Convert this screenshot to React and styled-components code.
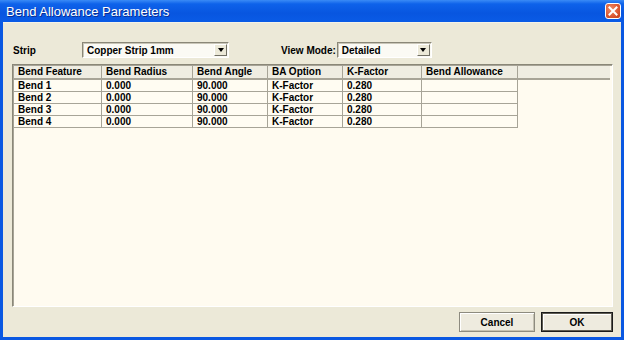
import React from "react";
import styled, { createGlobalStyle } from "styled-components";

const GlobalStyle = createGlobalStyle`
  html, body {
    margin: 0;
    padding: 0;
    background: #ffffff;
  }
  body {
    font-family: "Liberation Sans", Arial, sans-serif;
  }
`;

const columns = [
  { key: "feature", title: "Bend Feature", width: 88 },
  { key: "radius", title: "Bend Radius", width: 91 },
  { key: "angle", title: "Bend Angle", width: 75 },
  { key: "option", title: "BA Option", width: 75 },
  { key: "k", title: "K-Factor", width: 79 },
  { key: "allowance", title: "Bend Allowance", width: 96 },
];

const rows = [1, 2, 3, 4].map((n) => ({
  feature: `Bend ${n}`,
  radius: "0.000",
  angle: "90.000",
  option: "K-Factor",
  k: "0.280",
  allowance: "",
}));

function Combo({ width, value }) {
  return (
    <ComboBox $width={width}>
      <ComboText>{value}</ComboText>
      <DropButton>
        <Arrow />
      </DropButton>
    </ComboBox>
  );
}

function App() {
  return (
    <>
      <GlobalStyle />
      <Window>
        <TitleBar>
          <Title>Bend Allowance Parameters</Title>
          <CloseButton>
            <svg width="10" height="10" viewBox="0 0 10 10">
              <path
                d="M1.5 1.5 L8.5 8.5 M8.5 1.5 L1.5 8.5"
                stroke="#fff"
                strokeWidth="2"
                strokeLinecap="square"
              />
            </svg>
          </CloseButton>
        </TitleBar>
        <Body>
          <Toolbar>
            <Label $width={69}>Strip</Label>
            <Combo width={147} value="Copper Strip 1mm" />
            <Label $gap={52} $after={1}>View Mode:</Label>
            <Combo width={95} value="Detailed" />
          </Toolbar>
          <Grid>
            <HeaderRow>
              {columns.map((c) => (
                <HeaderCell key={c.key} $width={c.width}>
                  {c.title}
                </HeaderCell>
              ))}
              <HeaderFiller />
            </HeaderRow>
            {rows.map((r) => (
              <Row key={r.feature}>
                {columns.map((c) => (
                  <Cell key={c.key} $width={c.width}>
                    {r[c.key]}
                  </Cell>
                ))}
              </Row>
            ))}
          </Grid>
          <Buttons>
            <Button $width={76}>Cancel</Button>
            <Button $width={72} $default>
              OK
            </Button>
          </Buttons>
        </Body>
      </Window>
    </>
  );
}

const Window = styled.div`
  width: 624px;
  height: 340px;
  box-sizing: border-box;
  display: flex;
  flex-direction: column;
  padding: 0 3px 3px;
  background: #0a58e2;
`;

const TitleBar = styled.div`
  height: 22px;
  margin: 0 -3px;
  padding: 0 3px 0 6px;
  display: flex;
  align-items: center;
  justify-content: space-between;
  background: linear-gradient(
    #3a8bf6 0%,
    #0e62ea 18%,
    #0856e0 60%,
    #0a5be6 100%
  );
`;

const Title = styled.span`
  color: #ffffff;
  font-size: 13px;
  text-shadow: 1px 1px 0 #0b2d8f;
  white-space: nowrap;
`;

const CloseButton = styled.div`
  width: 16px;
  height: 16px;
  box-sizing: border-box;
  border: 1px solid #ffffff;
  border-radius: 3px;
  display: flex;
  align-items: center;
  justify-content: center;
  background: radial-gradient(circle at 35% 35%, #f08a66 0%, #dd5a35 55%, #c23d18 100%);
`;

const Body = styled.div`
  flex: 1;
  display: flex;
  flex-direction: column;
  padding: 19px 8px 5px 9px;
  background: #ece9d8;
  border-top: 1px solid #f4f2e8;
  box-sizing: border-box;
  min-height: 0;
`;

const Toolbar = styled.div`
  height: 16px;
  display: flex;
  align-items: center;
  padding-left: 1px;
`;

const Label = styled.span`
  width: ${(p) => (p.$width ? `${p.$width}px` : "auto")};
  margin-left: ${(p) => p.$gap || 0}px;
  margin-right: ${(p) => p.$after || 0}px;
  font-size: 10px;
  font-weight: bold;
  color: #000;
  white-space: nowrap;
`;

const ComboBox = styled.div`
  width: ${(p) => p.$width}px;
  height: 16px;
  box-sizing: border-box;
  display: flex;
  align-items: center;
  justify-content: space-between;
  padding: 1px;
  background: #fbfaf4;
  border: 1px solid;
  border-color: #8a8778 #ffffff #ffffff #8a8778;
  box-shadow: inset 1px 1px 0 #c9c6b8;
`;

const ComboText = styled.span`
  padding-left: 3px;
  font-size: 10px;
  font-weight: bold;
  color: #000;
  white-space: nowrap;
`;

const DropButton = styled.div`
  width: 13px;
  height: 12px;
  box-sizing: border-box;
  display: flex;
  align-items: center;
  justify-content: center;
  background: #ece9d8;
  border: 1px solid;
  border-color: #ffffff #716f64 #716f64 #ffffff;
`;

const Arrow = styled.div`
  width: 0;
  height: 0;
  border-left: 3px solid transparent;
  border-right: 3px solid transparent;
  border-top: 4px solid #000;
`;

const Grid = styled.div`
  flex: 1;
  margin-top: 6px;
  box-sizing: border-box;
  background: #fffbf0;
  border: 1px solid;
  border-color: #8a8778 #ffffff #ffffff #8a8778;
  box-shadow: inset 1px 1px 0 #a7a497;
  padding: 1px 1px 0 1px;
  overflow: hidden;
`;

const HeaderRow = styled.div`
  display: flex;
  height: 14px;
`;

const HeaderCell = styled.div`
  width: ${(p) => p.$width}px;
  box-sizing: border-box;
  padding-left: 4px;
  font-size: 10px;
  font-weight: bold;
  line-height: 12px;
  color: #000;
  background: #efede2;
  border-right: 1px solid #a7a497;
  border-bottom: 2px solid #a7a497;
  white-space: nowrap;
`;

const HeaderFiller = styled.div`
  flex: 1;
  background: #efede2;
  border-bottom: 2px solid #a7a497;
  margin-right: 1px;
`;

const Row = styled.div`
  display: flex;
  height: 12px;
`;

const Cell = styled.div`
  width: ${(p) => p.$width}px;
  box-sizing: border-box;
  padding-left: 4px;
  font-size: 10px;
  font-weight: bold;
  line-height: 11px;
  color: #000;
  background: #fffcf2;
  border-right: 1px solid #a7a497;
  border-bottom: 1px solid #a7a497;
  white-space: nowrap;
`;

const Buttons = styled.div`
  display: flex;
  justify-content: flex-end;
  gap: 6px;
  margin-top: 5px;
  height: 20px;
`;

const Button = styled.div`
  width: ${(p) => p.$width}px;
  height: 20px;
  box-sizing: border-box;
  display: flex;
  align-items: center;
  justify-content: center;
  font-size: 10px;
  font-weight: bold;
  color: #000;
  background: #eeebdf;
  border: 1px solid ${(p) => (p.$default ? "#1a1a1a" : "#8d8b7f")};
  box-shadow: ${(p) =>
    p.$default
      ? "inset 1px 1px 0 #5e5c52, inset -1px -1px 0 #5e5c52, inset 2px 2px 0 #ffffff"
      : "inset 1px 1px 0 #ffffff, inset -1px -1px 0 #c5c2b2"};
`;

export default App;
